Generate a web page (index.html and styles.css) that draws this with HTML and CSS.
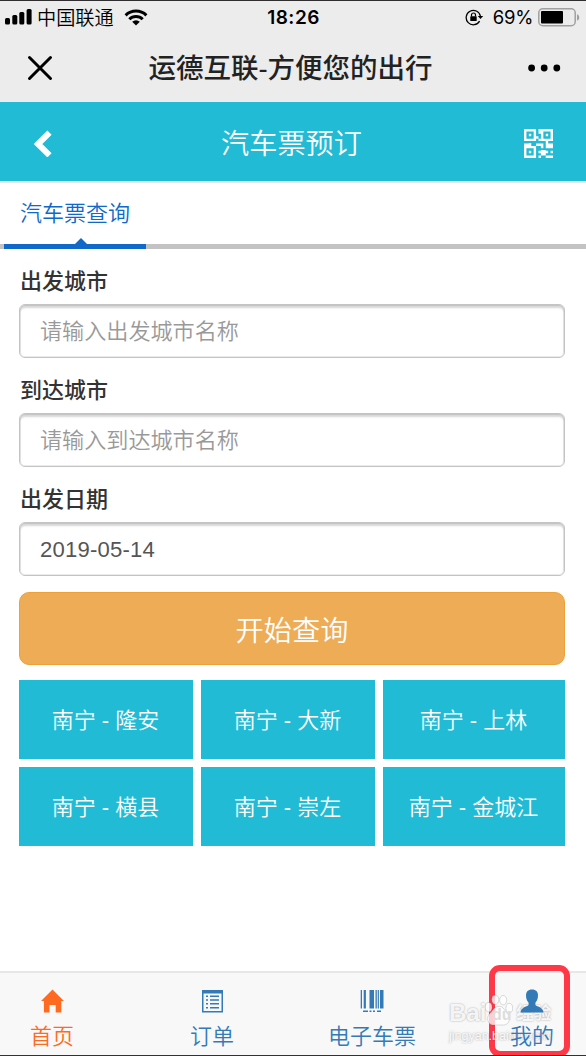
FILE: index.html
```
<!DOCTYPE html>
<html lang="zh-CN">
<head>
  <meta charset="UTF-8">
  <meta name="viewport" content="width=device-width, initial-scale=1">
  <title>汽车票预订</title>
  <link rel="stylesheet" href="styles.css">
</head>
<body>

  <div class="status-bar">
    <div class="status-left">
      <svg width="27" height="16" viewBox="0 0 27 16">
        <rect x="0" y="9" width="5" height="6.5" rx="1.5"/>
        <rect x="7.3" y="6" width="5" height="9.5" rx="1.5"/>
        <rect x="14.3" y="3" width="5" height="12.5" rx="1.5"/>
        <rect x="21.6" y="0" width="5" height="15.5" rx="1.5"/>
      </svg>
      <span class="carrier">中国联通</span>
      <svg class="wifi" width="24" height="17" viewBox="0 0 24 17">
        <g fill="none" stroke="#000" stroke-width="3">
          <path d="M1.6 6.3a15 15 0 0 1 20.8 0"/>
          <path d="M5.3 10.3a9.6 9.6 0 0 1 13.4 0"/>
        </g>
        <path d="M8.2 12.8a5.4 5.4 0 0 1 7.6 0L12 16.5z"/>
      </svg>
    </div>
    <span class="time">18:26</span>
    <div class="status-right">
      <svg class="lock" width="19" height="17" viewBox="0 0 19 17">
        <path d="M14.6 12.2A7.2 7.2 0 1 1 15.4 7" fill="none" stroke="#000" stroke-width="1.3"/>
        <path d="M12.8 7h5.4l-2.7 3z"/>
        <rect x="5.3" y="7.3" width="6.4" height="4.8" rx=".6"/>
        <path d="M6.5 7.5V6a2 2 0 0 1 4 0v1.5" fill="none" stroke="#000" stroke-width="1.2"/>
      </svg>
      <span class="percent">69%</span>
      <svg width="42" height="19" viewBox="0 0 42 19">
        <rect x=".8" y=".8" width="36.4" height="16.9" rx="4" fill="none" stroke="#a0a0a0" stroke-width="1.5"/>
        <rect x="3" y="3" width="22" height="12.4" rx="1"/>
        <path d="M39 6.2c3 .8 3 5.6 0 6.4z" fill="#a0a0a0"/>
      </svg>
    </div>
  </div>

  <div class="app-bar">
    <svg width="26" height="26" viewBox="0 0 26 26">
      <path d="M2.5 2.5l21 21M23.5 2.5l-21 21" stroke="#000" stroke-width="3" stroke-linecap="round"/>
    </svg>
    <span class="app-title">运德互联-方便您的出行</span>
    <svg width="34" height="8" viewBox="0 0 34 8">
      <circle cx="3.6" cy="4" r="3.4"/>
      <circle cx="16.2" cy="4" r="3.4"/>
      <circle cx="28.8" cy="4" r="3.4"/>
    </svg>
  </div>

  <header class="header">
    <svg width="18" height="27" viewBox="0 0 18 27">
      <path d="M15.5 2.7L4 14l11.5 11.3" fill="none" stroke="#fff" stroke-width="6"/>
    </svg>
    <h1>汽车票预订</h1>
    <svg class="qr" width="29" height="29" viewBox="0 0 12 12" fill="#fff">
      <path fill-rule="evenodd" d="M0 0h5v5H0zM1 1v3h3V1zM2 2h1v1H2z"/>
      <path fill-rule="evenodd" d="M7 0h5v5H7zM8 1v3h3V1zM9 2h1v1H9z"/>
      <path fill-rule="evenodd" d="M0 7h5v5H0zM1 8v3h3V8zM2 9h1v1H2z"/>
      <path d="M6 0h1v2H6zM5 3h1v1H5zM6 4h1v1H6zM0 6h2v1H0zM2 5.8h1V7H2zM5 6h3v1H5zM7 7h1v1H7zM9 5h1v1h2v2H9zM6 9h1v-.3h2V9h1v1H9v1H7v-1H6zM11 9h1v1h-1zM6 11h1v1H6zM9 11h3v1H9z"/>
    </svg>
  </header>

  <nav class="tabs">
    <a class="tab active">汽车票查询</a>
  </nav>

  <main class="content">
    <form class="search-form">
      <label class="label" for="from">出发城市</label>
      <input class="field" id="from" type="text" placeholder="请输入出发城市名称">
      <label class="label" for="to">到达城市</label>
      <input class="field" id="to" type="text" placeholder="请输入到达城市名称">
      <label class="label" for="date">出发日期</label>
      <input class="field date" id="date" type="text" value="2019-05-14">
      <button class="btn-search" type="button">开始查询</button>
    </form>

    <div class="routes">
      <a class="route">南宁 - 隆安</a>
      <a class="route">南宁 - 大新</a>
      <a class="route">南宁 - 上林</a>
      <a class="route">南宁 - 横县</a>
      <a class="route">南宁 - 崇左</a>
      <a class="route">南宁 - 金城江</a>
    </div>
  </main>

  <footer class="bottom-nav">
    <a class="nav-item current">
      <svg width="24" height="24" viewBox="0 0 24 24">
        <path d="M12.5.5L24 12h-2.7v11.5h-5.6V16H9.5v7.5H3.9V12H1z"/>
      </svg>
      <span>首页</span>
    </a>
    <a class="nav-item">
      <svg width="24" height="24" viewBox="0 0 24 24">
        <path fill-rule="evenodd" d="M2 1h21v22.5H2zM3.5 4.5V22h18V4.5z"/>
        <path d="M6 6.5h2V8H6zM10 6.5h9V8h-9zM6 10.3h2v1.5H6zM10 10.3h9v1.5h-9zM6 14.1h2v1.5H6zM10 14.1h9v1.5h-9zM6 17.9h2v1.5H6zM10 17.9h9v1.5h-9z"/>
      </svg>
      <span>订单</span>
    </a>
    <a class="nav-item">
      <svg width="24" height="24" viewBox="0 0 24 24">
        <path d="M.7 1H2v18.5H.7zM3.7 1h2.2v18.5H3.7zM9.5 1H14v18.5H9.5zM15.5 1h1.3v18.5h-1.3zM17.7 1h1.2v18.5h-1.2zM20 1h3.5v18.5H20z"/>
        <path d="M3 21.5h5V23H3zM9.5 21.5h2V23h-2zM13 21.5h2V23h-2zM17 21.5h4V23h-4z"/>
      </svg>
      <span>电子车票</span>
    </a>
    <a class="nav-item">
      <svg class="user" width="24" height="24" viewBox="0 0 24 24">
        <path d="M12 .5c4 0 6 2.3 6 6 0 4-1.4 5.800-2.600 7.300V16c2 1.800 8.100 2.500 8.100 7.500H.5C.5 18.500 6.600 17.800 8.600 16v-2.200C7.400 12.300 6 10.500 6 6.500c0-3.700 2-6 6-6z"/>
      </svg>
      <span>我的</span>
    </a>
    <div class="highlight"></div>
    <div class="watermark">
      <div class="wm-logo">
        <span>Bai</span>
        <svg width="30" height="34" viewBox="0 0 32 34">
          <ellipse cx="5" cy="14" rx="3.6" ry="5"/>
          <ellipse cx="12" cy="6" rx="3.8" ry="5"/>
          <ellipse cx="20.5" cy="6.5" rx="3.8" ry="5"/>
          <ellipse cx="27" cy="15" rx="3.6" ry="5"/>
          <path d="M16 13c5 0 6 5 9 8 4 4 2 12-4 12H10c-6 0-8-8-4-12 3-3 5-8 10-8z"/>
        </svg>
        <span class="wm-du">du</span>
        <span class="wm-cn">经验</span>
      </div>
      <div class="wm-url">jingyan.baidu.com</div>
    </div>
  </footer>

</body>
</html>
```
FILE: styles.css
```
:root {
  --cyan: #21bbd5;
  --blue: #337ab7;
  --tab-blue: #1068c9;
  --orange: #ff6a22;
}

* {
  box-sizing: border-box;
}

body {
  margin: 0;
  height: 1056px;
  display: flex;
  flex-direction: column;
  overflow: hidden;
  background: #fff;
  border-top: 1px solid #302d31;
  border-bottom: 1px solid #333;
  font-family: "Liberation Sans", "Noto Sans CJK SC", sans-serif;
  font-weight: 350;
}

svg {
  display: block;
  flex: none;
}

/* Barra de estado */
.status-bar {
  display: grid;
  grid-template-columns: 1fr auto 1fr;
  align-items: center;
  height: 32px;
  padding: 0 6px 0 5px;
  background: #ececec;
}

.status-left,
.status-right {
  display: flex;
  align-items: center;
}

.status-right {
  justify-content: flex-end;
}

.carrier {
  margin: 0 10px 0 5px;
  font-size: 19.2px;
}

.time {
  padding-left: 2px;
  font-family: Inter, sans-serif;
  font-size: 19px;
  font-weight: 600;
  letter-spacing: 0.5px;
}

.percent {
  margin: 0 5px 0 9px;
  font-family: Inter, sans-serif;
  font-size: 18.5px;
  font-weight: 400;
  letter-spacing: -0.3px;
}

.app-bar {
  display: flex;
  align-items: center;
  justify-content: space-between;
  height: 69px;
  padding: 0 24px 0 27px;
  background: #ececec;
}

.app-title {
  margin-top: -4px;
  color: #222;
  font-size: 27.5px;
  font-weight: 500;
}

/* Cabecera */
.header {
  display: flex;
  align-items: center;
  justify-content: space-between;
  height: 81px;
  padding: 3px 33px 0 34px;
  background: var(--cyan);
  border-bottom: 2px solid #e7e7e7;
}

.header h1 {
  margin: -3px 0 0 7px;
  color: #fff;
  font-size: 28.2px;
  font-weight: 350;
}

.tabs {
  display: flex;
  height: 66px;
  padding-left: 4px;
  background: linear-gradient(#c3c3c3, #c3c3c3) bottom / 100% 5px no-repeat;
}

.tab {
  position: relative;
  width: 142px;
  padding-left: 16px;
  border-bottom: 5px solid var(--tab-blue);
  color: var(--tab-blue);
  font-size: 22px;
  line-height: 61px;
}

.tab::after {
  content: "";
  position: absolute;
  left: 71px;
  bottom: 0;
  border: 6px solid transparent;
  border-top: 0;
  border-bottom-color: var(--tab-blue);
}

/* Formulario */
.content {
  flex: 1;
  padding: 12px 21px 0 19px;
}

.search-form {
  display: flex;
  flex-direction: column;
}

.label {
  height: 43px;
  padding-left: 1px;
  color: #333;
  font-size: 22px;
  font-weight: 500;
  line-height: 42px;
}

.field {
  height: 54px;
  margin-bottom: 12px;
  padding: 2px 20px 0;
  border: 1px solid #c4c4c4;
  border-radius: 6px;
  background: #fff;
  box-shadow: inset 0 0 0 1px rgba(0, 0, 0, 0.08), inset 0 3px 2px rgba(0, 0, 0, 0.16);
  color: #555;
  font: inherit;
  font-size: 22.1px;
}

.field::placeholder {
  color: #999;
}

.date {
  font-weight: 400;
  letter-spacing: 0.2px;
}

.btn-search {
  height: 73px;
  margin-top: 4px;
  padding-bottom: 2px;
  border: 1px solid #eea236;
  border-radius: 10px;
  background: #eeac57;
  color: #fff;
  font: inherit;
  font-size: 28.2px;
}

.routes {
  display: grid;
  grid-template-columns: 174px 174px 1fr;
  grid-auto-rows: 79px;
  gap: 8px;
  margin-top: 15.4px;
}

.route {
  padding-right: 1px;
  background: var(--cyan);
  color: #fff;
  font-size: 22px;
  line-height: 81px;
  text-align: center;
}

/* Menu inferior */
.bottom-nav {
  position: relative;
  display: grid;
  grid-template-columns: repeat(4, 160px);
  justify-content: center;
  height: 84px;
  padding: 16px 2px 0 0;
  border-top: 2px solid #e7e7e7;
  background: #f8f8f8;
}

.nav-item {
  display: flex;
  flex-direction: column;
  align-items: center;
  color: var(--blue);
  fill: currentColor;
  font-size: 22px;
  line-height: 32px;
}

.nav-item span {
  position: relative;
  z-index: 1;
  margin-top: 8px;
}

.user {
  position: relative;
  z-index: 1;
}

.current {
  color: var(--orange);
}

.highlight {
  position: absolute;
  left: 489px;
  top: -8px;
  width: 81px;
  height: 92px;
  border: 6px solid #ff3848;
  border-radius: 11px;
}

/* Marca de agua */
.watermark {
  position: absolute;
  left: 449px;
  top: 19px;
  color: rgba(255, 255, 255, 0.9);
  font-weight: 700;
  text-shadow: 0 0 2px rgba(0, 0, 0, 0.35);
}

.wm-logo {
  position: relative;
  display: flex;
  align-items: flex-end;
  height: 35px;
  font-size: 24px;
  line-height: 28px;
}

.wm-logo svg {
  margin-left: -2px;
  fill: rgba(255, 255, 255, 0.75);
  stroke: rgba(0, 0, 0, 0.15);
}

.wm-du {
  position: absolute;
  left: 43px;
  bottom: -2px;
  color: #ddd;
  font-size: 16px;
  text-shadow: none;
}

.wm-cn {
  margin-left: 2px;
  font-size: 17.5px;
}

.wm-url {
  font-size: 12.5px;
  font-weight: 400;
  line-height: 18px;
}
```
